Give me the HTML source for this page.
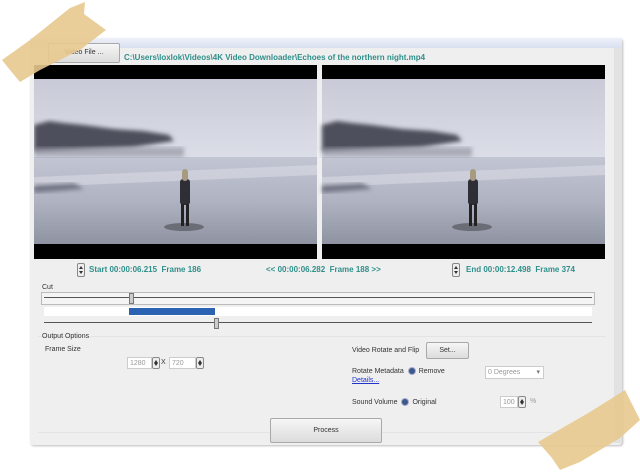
<!DOCTYPE html>
<html><head><style>
body{margin:0;width:640px;height:475px;background:#fff;position:relative;overflow:hidden;font-family:"Liberation Sans",sans-serif;font-size:7px;color:#333}
.a{position:absolute}
.teal{color:#2f8f8a;font-weight:bold;font-size:8px}
.btn{position:absolute;border:1px solid #a9a9a9;border-radius:2px;background:linear-gradient(#f6f6f6,#dcdcdc);text-align:center;color:#333}
.spin{position:absolute;width:6px;height:12px;border:1px solid #888;border-radius:2px;background:#eee}
.spin:before{content:"";position:absolute;left:1px;top:2px;border:2px solid transparent;border-bottom:3px solid #333;border-top:0}
.spin:after{content:"";position:absolute;left:1px;bottom:2px;border:2px solid transparent;border-top:3px solid #333;border-bottom:0}
.inp{position:absolute;background:#fff;border:1px solid #ccc;color:#999;font-size:7px;line-height:11px;padding-left:2px;box-sizing:border-box;height:12px}
.radio{display:inline-block;width:6px;height:6px;border-radius:50%;background:#3b5a8a;border:1px solid #aac;vertical-align:middle;margin-right:3px}
</style></head><body>
<div class="a" style="left:38px;top:420px;width:160px;height:20px;background:linear-gradient(175deg,#777,rgba(255,255,255,0) 60%);transform:skewY(-3deg)"></div>
<div class="a" style="left:30px;top:38px;width:592px;height:407px;background:#efefef;border-radius:3px;box-shadow:1px 1px 2px #bbb"></div>
<div class="a" style="left:30px;top:38px;width:592px;height:10px;background:linear-gradient(#eef1fa,#d9dff0)"></div>
<div class="a" style="left:614px;top:48px;width:8px;height:395px;background:#e2e2e2"></div>
<div class="btn" style="left:48px;top:43px;width:70px;height:18px;line-height:18px;font-size:7px">Video File ...</div>
<div class="a teal" style="left:124px;top:53px">C:\Users\loxlok\Videos\4K Video Downloader\Echoes of the northern night.mp4</div>
<svg class="a" style="left:34px;top:65px" width="572" height="194">
<defs>
<filter id="bl"><feGaussianBlur stdDeviation="2"/></filter>
<linearGradient id="sky" x1="0" y1="0" x2="0" y2="1"><stop offset="0" stop-color="#c8cbd7"/><stop offset=".5" stop-color="#dcdee8"/><stop offset="1" stop-color="#cfd2dd"/></linearGradient>
<linearGradient id="ice" x1="0" y1="0" x2="0" y2="1"><stop offset="0" stop-color="#c2c5d2"/><stop offset=".5" stop-color="#b0b3c2"/><stop offset="1" stop-color="#8f92a1"/></linearGradient>
<g id="img">
<rect x="0" y="0" width="283" height="194" fill="#000"/>
<rect x="0" y="14" width="283" height="165" fill="url(#sky)"/>
<rect x="0" y="92" width="283" height="87" fill="url(#ice)"/>
<path d="M0 112 L283 100 L283 110 L0 122Z" fill="#d8dae4" opacity=".6"/>
<path d="M0 60 L15 56 L30 58 L50 60 L80 64 L110 66 L135 70 L140 76 L100 82 L0 86Z" fill="#4e505c" filter="url(#bl)"/>
<rect x="0" y="82" width="150" height="10" fill="#8a8d9a" opacity=".6" filter="url(#bl)"/>
<path d="M0 120 L40 118 L50 124 L0 128Z" fill="#5a5d6a" opacity=".7" filter="url(#bl)"/>
<ellipse cx="150" cy="162" rx="20" ry="4" fill="#6b6d76"/>
<rect x="146" y="114" width="10" height="26" fill="#2e2e35" rx="3"/>
<rect x="148" y="104" width="6" height="12" fill="#a89a80" rx="3"/>
<rect x="147" y="139" width="3" height="22" fill="#222"/><rect x="152" y="139" width="3" height="22" fill="#222"/>
<rect x="0" y="179" width="283" height="15" fill="#000"/>
</g></defs>
<use href="#img"/><use href="#img" x="288"/>
</svg>
<div class="spin" style="left:77px;top:263px"></div>
<div class="a teal" style="left:89px;top:265px">Start 00:00:06.215&nbsp; Frame 186</div>
<div class="a teal" style="left:266px;top:265px">&lt;&lt; 00:00:06.282&nbsp; Frame 188 &gt;&gt;</div>
<div class="spin" style="left:452px;top:263px"></div>
<div class="a teal" style="left:466px;top:265px">End 00:00:12.498&nbsp; Frame 374</div>
<div class="a" style="left:42px;top:284px">Cut</div>
<div class="a" style="left:41px;top:292px;width:552px;height:11px;border:1px solid #bbb;background:#f4f4f4"></div>
<div class="a" style="left:44px;top:297px;width:548px;height:1px;background:#555"></div>
<div class="a" style="left:129px;top:293px;width:3px;height:9px;background:#ccc;border:1px solid #777"></div>
<div class="a" style="left:44px;top:307px;width:548px;height:9px;background:#fff"></div>
<div class="a" style="left:129px;top:308px;width:86px;height:7px;background:#2b63b2"></div>
<div class="a" style="left:44px;top:322px;width:548px;height:1px;background:#555"></div>
<div class="a" style="left:214px;top:318px;width:3px;height:9px;background:#ccc;border:1px solid #777"></div>
<div class="a" style="left:38px;top:336px;width:568px;height:1px;background:#e4e4e4"></div>
<div class="a" style="left:42px;top:333px">Output Options</div>
<div class="a" style="left:45px;top:346px">Frame Size</div>
<div class="inp" style="left:127px;top:357px;width:25px">1280</div><div class="spin" style="left:152px;top:357px;height:10px"></div>
<div class="a" style="left:161px;top:359px">X</div>
<div class="inp" style="left:169px;top:357px;width:27px">720</div><div class="spin" style="left:196px;top:357px;height:10px"></div>
<div class="a" style="left:352px;top:347px">Video Rotate and Flip</div>
<div class="btn" style="left:426px;top:342px;width:41px;height:15px;line-height:15px">Set...</div>
<div class="a" style="left:352px;top:367px">Rotate Metadata <span class="radio" style="margin-left:2px"></span>Remove</div>
<div class="a" style="left:352px;top:377px;color:#2233cc;text-decoration:underline">Details...</div>
<div class="inp" style="left:485px;top:366px;width:59px;height:13px">0 Degrees<span style="float:right;margin-right:3px;color:#777">▾</span></div>
<div class="a" style="left:352px;top:398px">Sound Volume&nbsp; <span class="radio"></span>Original</div>
<div class="inp" style="left:500px;top:396px;width:18px">100</div><div class="spin" style="left:518px;top:396px;height:10px"></div>
<div class="a" style="left:530px;top:398px;color:#999">%</div>
<div class="a" style="left:38px;top:432px;width:568px;height:1px;background:#e4e4e4"></div>
<div class="btn" style="left:270px;top:418px;width:110px;height:23px;line-height:23px">Process</div>
<svg class="a" style="left:0;top:0" width="110" height="90"><path d="M2 60 L30 40 L70 8 L85 2 L84 14 L106 30 L80 50 L40 70 L20 82 L10 70Z" fill="#e8c98e" opacity=".9"/></svg>
<svg class="a" style="left:530px;top:390px" width="110" height="85"><path d="M8 52 L60 22 L95 0 L100 10 L110 30 L90 48 L50 72 L30 80 L22 68Z" fill="#e8c98e" opacity=".9"/></svg>
</body></html>
